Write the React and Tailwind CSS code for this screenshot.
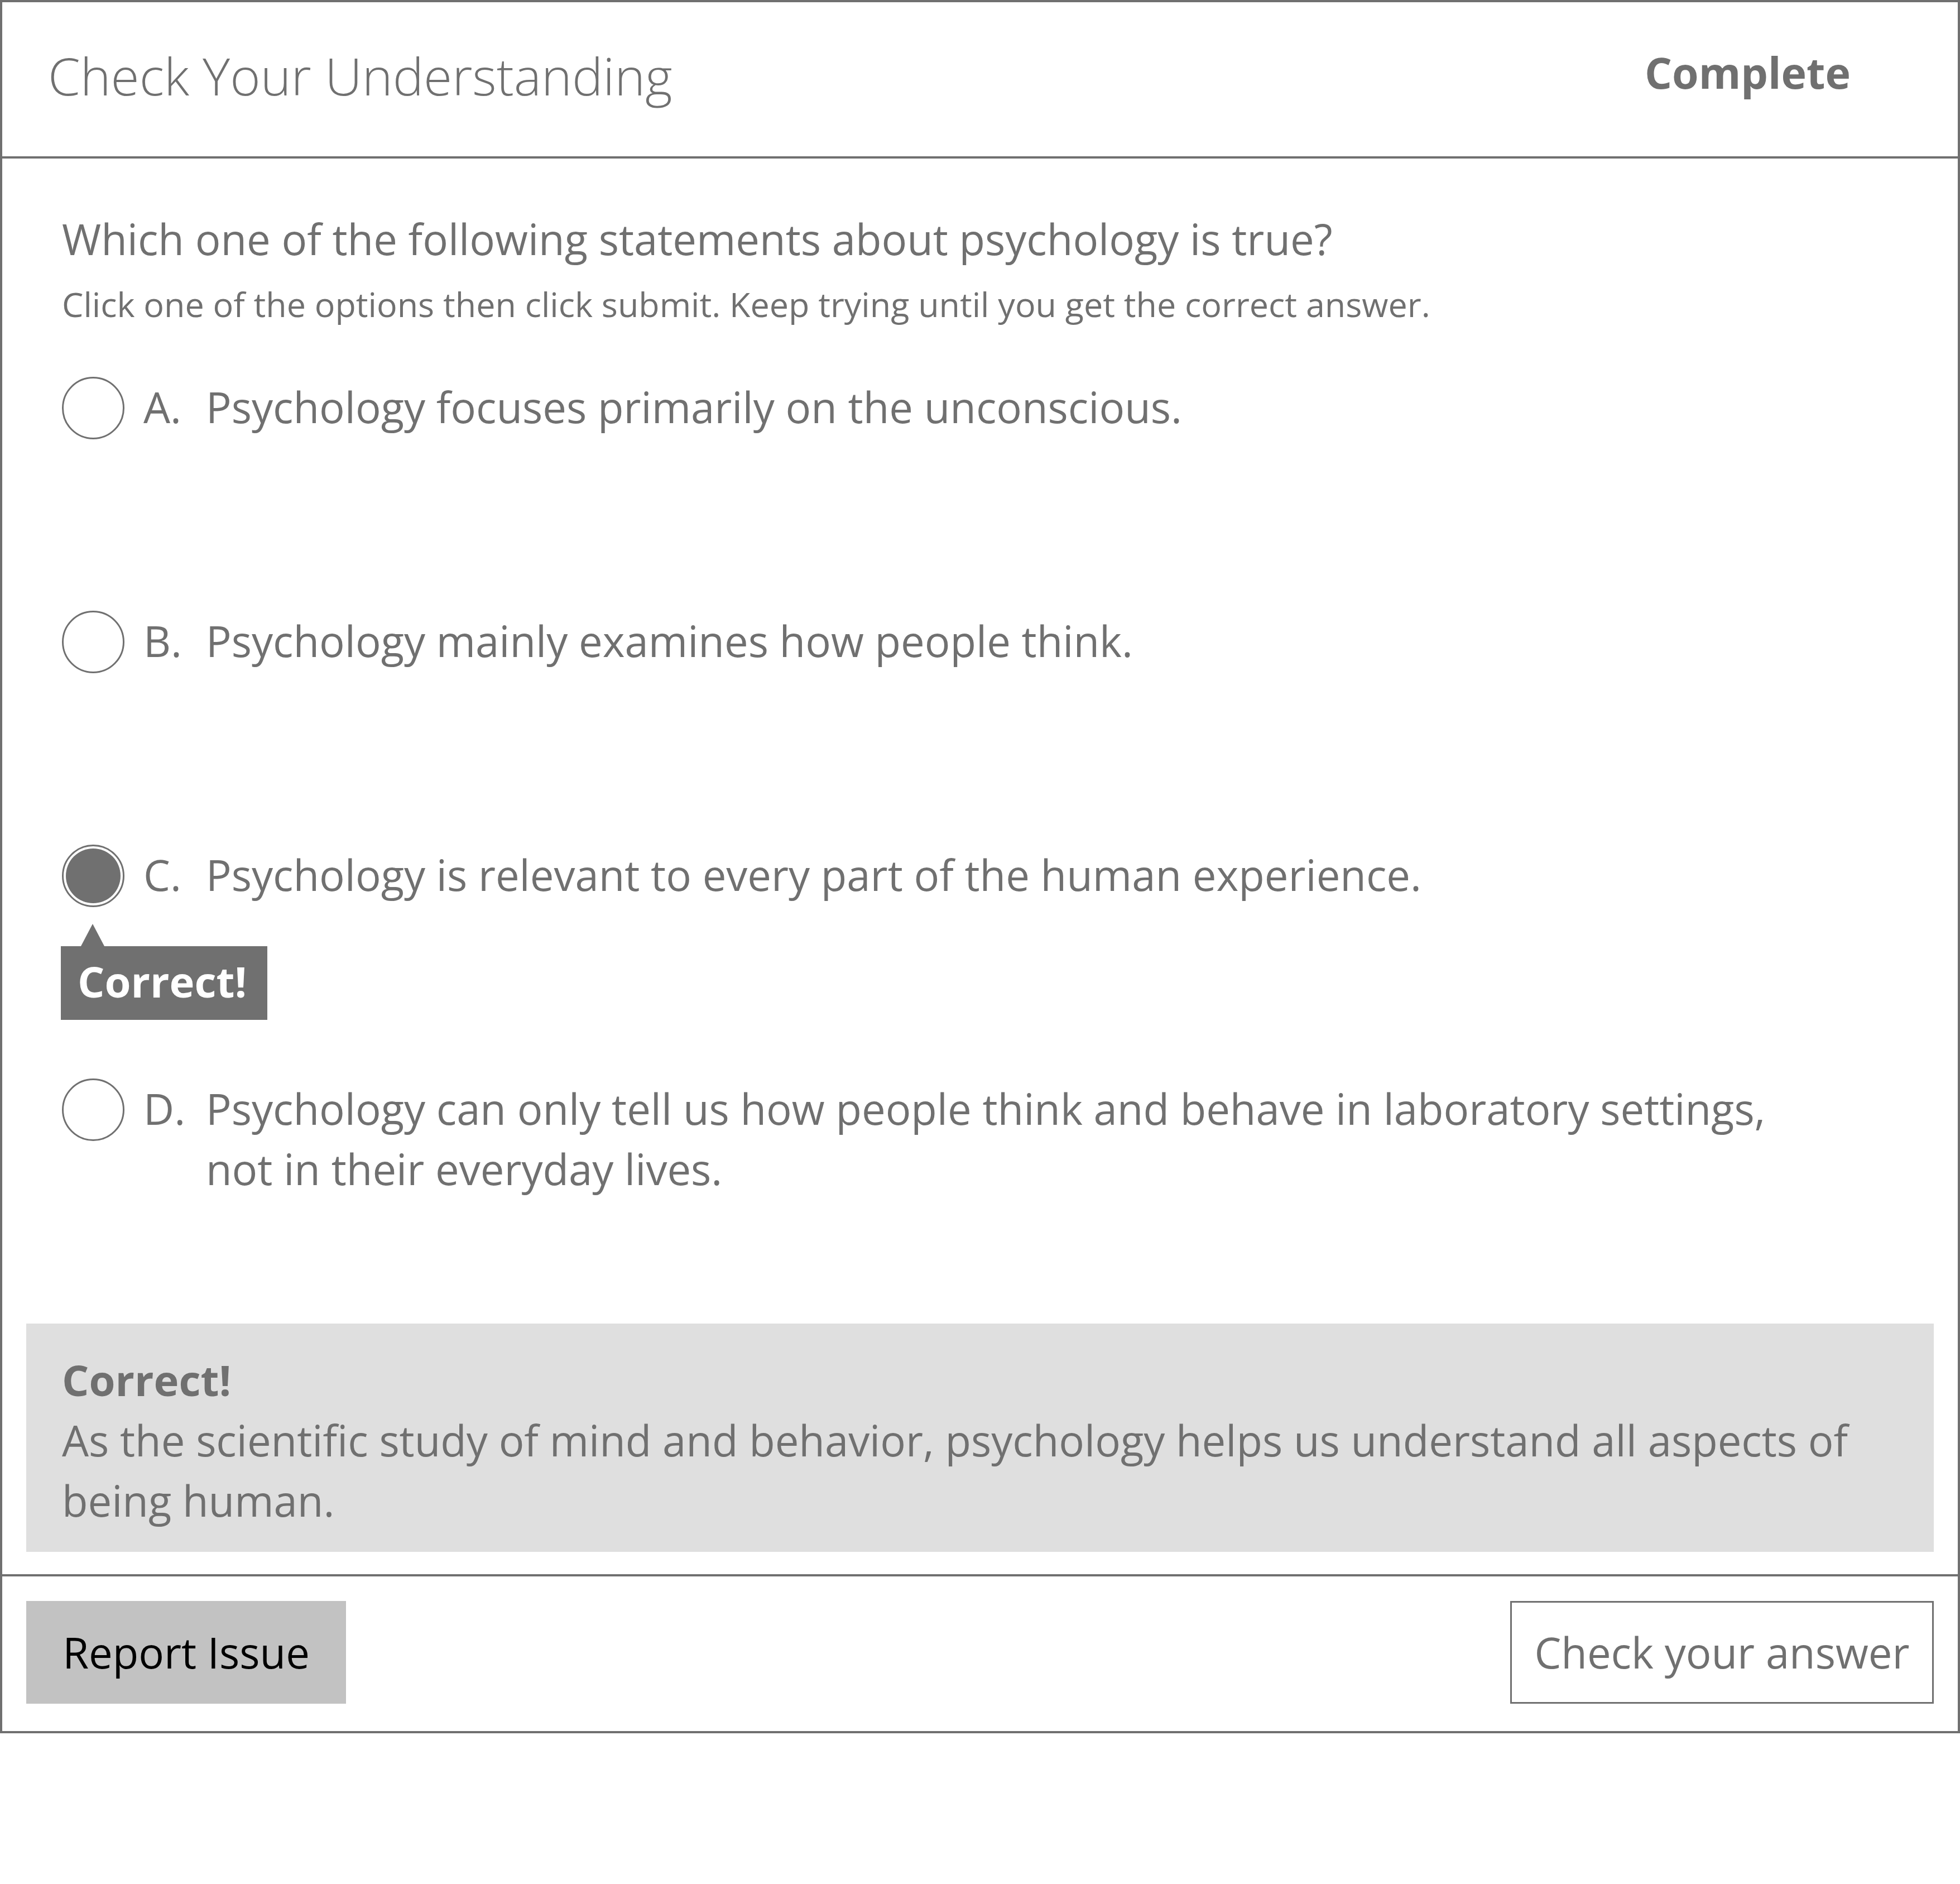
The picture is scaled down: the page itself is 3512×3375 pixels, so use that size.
import React from "react";

const options = [
  { key: "A", text: ["Psychology focuses primarily on the unconscious."] },
  { key: "B", text: ["Psychology mainly examines how people think."] },
  { key: "C", text: ["Psychology is relevant to every part of the human experience."], checked: true },
  {
    key: "D",
    text: [
      "Psychology can only tell us how people think and behave in laboratory settings,",
      "not in their everyday lives.",
    ],
  },
];

function Radio({ checked }) {
  return (
    <div className="w-[112px] h-[112px] shrink-0 rounded-full border-[3px] border-[#707070] bg-white p-[4px]">
      {checked ? <div className="w-full h-full rounded-full bg-[#707070]" /> : null}
    </div>
  );
}

export default function App() {
  return (
    <div className="w-full min-h-screen bg-white font-['Open_Sans',sans-serif] text-[#707070]">
      <div className="w-full border-4 border-[#707070]">
        {/* Header */}
        <div className="h-[280px] border-b-4 border-[#707070] flex items-center justify-between pl-[82px] pr-[192px]">
          <div className="text-[93px] font-[350] leading-none mb-[13px]">Check Your Understanding</div>
          <div className="text-[77px] font-bold leading-none mb-[25px]">Complete</div>
        </div>

        {/* Body */}
        <div className="pt-[90px] pl-[107px]">
          <div className="text-[76px] leading-[108px]">
            Which one of the following statements about psychology is true?
          </div>
          <div className="text-[61px] leading-[86px] mt-[20px]">
            Click one of the options then click submit. Keep trying until you get the correct answer.
          </div>

          <div className="mt-[87px] flex flex-col gap-[307px]">
            {options.map((o) => (
              <div key={o.key} className="relative flex items-start">
                <Radio checked={o.checked} />
                <div className="ml-[34px] w-[112px] shrink-0 text-[76px] leading-[108px]">{o.key}.</div>
                <div className="text-[76px] leading-[108px] whitespace-nowrap">
                  {o.text.map((t, i) => (
                    <div key={i}>{t}</div>
                  ))}
                </div>
                {o.checked ? (
                  <div className="absolute left-[-2px] top-[142px]">
                    <svg width="46" height="40" viewBox="0 0 46 40" className="block ml-[34px]">
                      <polygon points="23,0 44,40 2,40" fill="#707070" />
                    </svg>
                    <div className="w-[370px] h-[132px] bg-[#707070] text-white font-bold text-[76px] leading-[108px] pl-[30px] pt-[9px]">
                      Correct!
                    </div>
                  </div>
                ) : null}
              </div>
            ))}
          </div>
        </div>

        {/* Feedback */}
        <div className="mx-[43px] mt-[223px] mb-[40px] bg-[#dfdfdf] pl-[64px] pt-[47px] pb-[38px] text-[76px] leading-[108px]">
          <div className="font-bold">Correct!</div>
          <div>
            As the scientific study of mind and behavior, psychology helps us understand all aspects of
            <br />
            being human.
          </div>
        </div>

        {/* Footer */}
        <div className="border-t-4 border-[#707070] px-[43px] pt-[44px] pb-[49px] flex items-center justify-between">
          <button className="w-[573px] h-[184px] bg-[#c2c2c2] text-black text-[76px] leading-[108px] flex items-center justify-center">
            Report Issue
          </button>
          <button className="w-[759px] h-[184px] bg-white border-[3px] border-[#707070] text-[#707070] text-[76px] leading-[108px] flex items-center justify-center">
            Check your answer
          </button>
        </div>
      </div>
    </div>
  );
}
